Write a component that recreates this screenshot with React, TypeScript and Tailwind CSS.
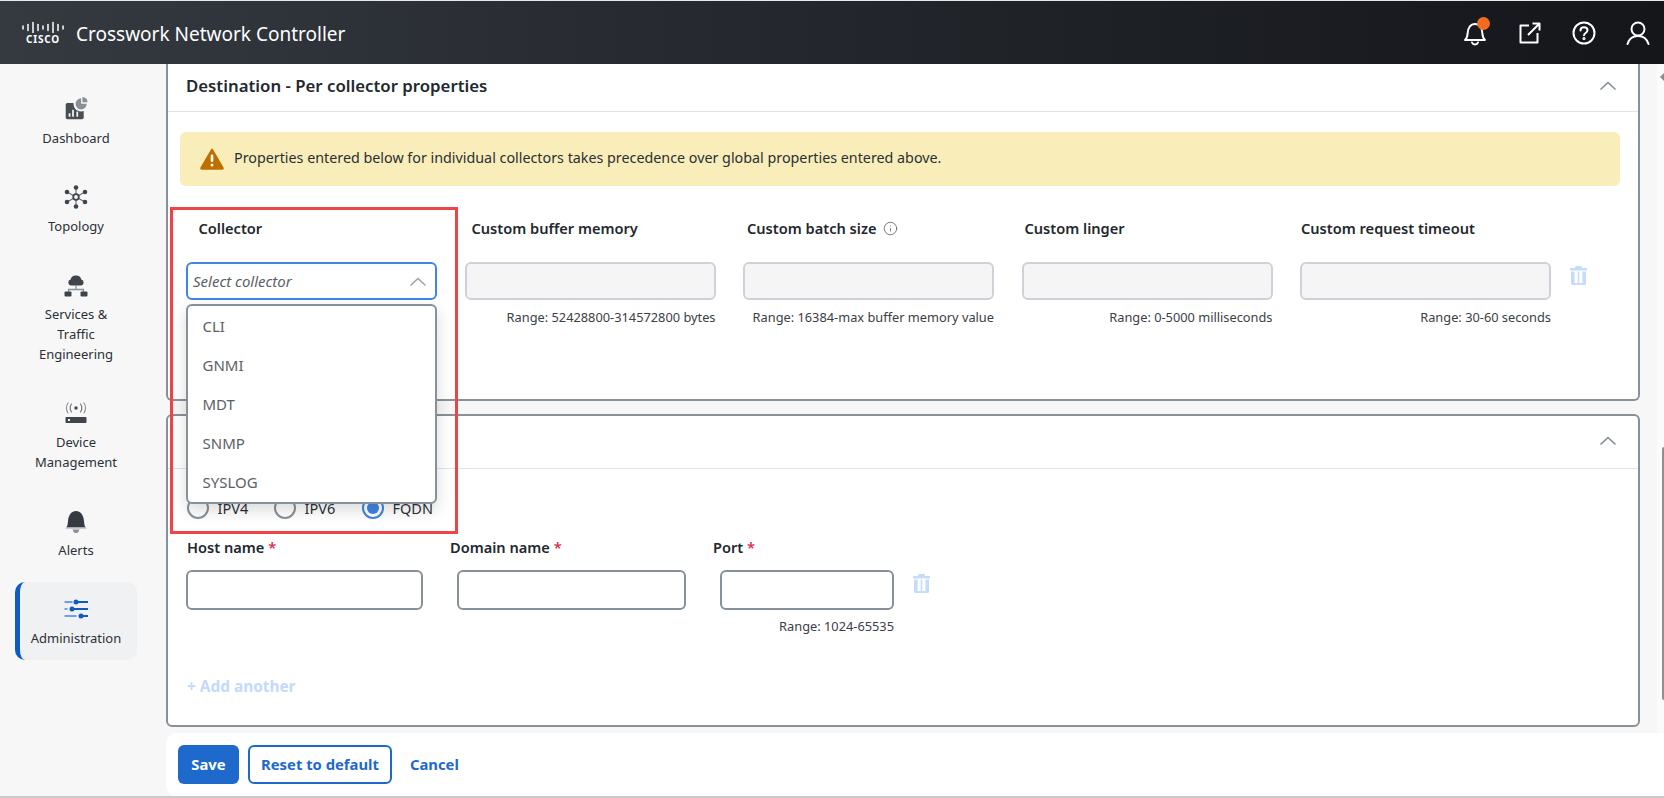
import { Info } from "lucide-react";

const font = "font-['Noto_Sans',sans-serif]";

function CiscoLogo() {
  const bars = [3, 6, 10, 6, 3, 6, 10, 6, 3];
  return (
    <div className="flex w-[42px] flex-col items-center">
      <svg width="42" height="12" viewBox="0 0 42 12" fill="none">
        {bars.map((h, i) => (
          <line key={i} x1={1 + i * 5} x2={1 + i * 5} y1={6 - h / 2 + 0.5} y2={6 + h / 2 + 0.5} stroke="#fff" strokeWidth="1.5" strokeLinecap="round" />
        ))}
      </svg>
      <span className="mt-[1px] text-[10px] leading-[10px] font-bold tracking-[0.8px] text-white">CISCO</span>
    </div>
  );
}

function HeaderBell() {
  return (
    <div className="relative h-[26px] w-[26px]">
      <svg width="26" height="26" viewBox="0 0 26 26" fill="none" stroke="#fff" strokeWidth="2" strokeLinecap="round" strokeLinejoin="round">
        <path d="M3 20c2-1.600 2.400-3.200 2.600-6.500C5.900 8 8.600 4 13 4s7.100 4 7.400 9.500c.2 3.300.6 4.900 2.600 6.500z" />
        <path d="M10 22.500c.5 1.300 1.600 2 3 2s2.500-.7 3-2" />
      </svg>
      <span className="absolute top-[-3px] left-[15px] h-[13px] w-[13px] rounded-full bg-[#f26b21]" />
    </div>
  );
}

function HeaderExternal() {
  return (
    <svg width="24" height="24" viewBox="0 0 24 24" fill="none" stroke="#fff" strokeWidth="2" strokeLinejoin="round">
      <path d="M11 4.500H2.500v17h17V12" />
      <path d="M10 14 21 3M14.500 2.500h7v7" />
    </svg>
  );
}

function HeaderHelp() {
  return (
    <svg width="24" height="24" viewBox="0 0 24 24" fill="none" stroke="#fff" strokeWidth="2" strokeLinecap="round">
      <circle cx="12" cy="12" r="10.500" />
      <path d="M8.500 9.500c0-2 1.500-3.200 3.500-3.200s3.500 1.200 3.500 3c0 2.700-3.500 2.600-3.500 5" />
      <circle cx="12" cy="17.500" r="0.600" fill="#fff" />
    </svg>
  );
}

function HeaderUser() {
  return (
    <svg width="24" height="24" viewBox="0 0 24 24" fill="none" stroke="#fff" strokeWidth="2" strokeLinecap="round">
      <circle cx="12" cy="8" r="6.500" />
      <path d="M1.500 23c1.500-5 5-8 10.500-8s9 3 10.500 8" />
    </svg>
  );
}

function DashboardIcon() {
  return (
    <svg width="28" height="28" viewBox="0 0 28 28">
      <rect x="2" y="7" width="21" height="19" rx="2" fill="#494e55" />
      <circle cx="20" cy="8" r="9" fill="#f7f7f8" />
      <path d="M20 1.500a6.500 6.500 0 1 0 6.500 6.500H20z" fill="#888f98" />
      <path d="M21.500 0a6.500 6.500 0 0 1 6 6h-6z" fill="#888f98" />
      <rect x="5.500" y="19" width="2" height="4" fill="#f7f7f8" />
      <rect x="9.500" y="15" width="2" height="8" fill="#f7f7f8" />
      <rect x="14.500" y="17" width="2" height="6" fill="#f7f7f8" />
    </svg>
  );
}

function TopologyIcon() {
  const nodes = [[12, 2.500], [12, 21.500], [3, 7], [21, 7], [3, 17], [21, 17]];
  return (
    <svg width="24" height="24" viewBox="0 0 24 24">
      {nodes.map(([x, y]) => (
        <g key={`${x}-${y}`}>
          <line x1="12" y1="12" x2={x} y2={y} stroke="#6b7178" strokeWidth="1.200" />
          <circle cx={x} cy={y} r="2.300" fill="#40454c" />
        </g>
      ))}
      <circle cx="12" cy="12" r="2.800" fill="#f7f7f8" stroke="#40454c" strokeWidth="1.800" />
    </svg>
  );
}

function ServicesIcon() {
  return (
    <svg width="24" height="24" viewBox="0 0 24 24">
      <path d="M7 12.500a3 3 0 0 1-.4-5.900A5.300 5.300 0 0 1 12 2.500a5.300 5.300 0 0 1 5.300 4.100A3 3 0 0 1 17 12.500z" fill="#3f444b" />
      <path d="M12 12v4.500M4.500 20v-3.500h15V20" stroke="#8a9199" strokeWidth="1.300" fill="none" />
      <rect x="0.500" y="18.500" width="7" height="5" rx="1" fill="#3f444b" />
      <rect x="16.500" y="18.500" width="7" height="5" rx="1" fill="#3f444b" />
    </svg>
  );
}

function DeviceIcon() {
  return (
    <svg width="24" height="24" viewBox="0 0 24 24" fill="none">
      <circle cx="12" cy="7" r="1.700" fill="#40454c" />
      <path d="M7.500 3c-1.600 2.400-1.600 5.600 0 8M16.500 3c1.600 2.400 1.600 5.600 0 8" stroke="#6b7178" strokeWidth="1.100" strokeLinecap="round" />
      <path d="M4 2c-2 3.200-2 6.800 0 10M20 2c2 3.200 2 6.800 0 10" stroke="#8a9199" strokeWidth="1.100" strokeLinecap="round" />
      <rect x="1.500" y="16" width="21" height="6" rx="1" fill="#40454c" />
      <rect x="4" y="18" width="2" height="2" fill="#f7f7f8" />
    </svg>
  );
}

function AlertsIcon() {
  return (
    <svg width="24" height="24" viewBox="0 0 24 24">
      <path d="M2 18.500c1.300-1 1.700-2.500 2-6.500C4.400 6 7.600 2 12 2s7.600 4 8 10c.3 4 .7 5.500 2 6.500z" fill="#363b42" />
      <rect x="1.500" y="18.500" width="21" height="1.300" rx="0.600" fill="#b9bec4" />
      <path d="M8.500 20.500h7l-1 2.200a3 3 0 0 1-5 0z" fill="#8a9199" />
    </svg>
  );
}

function AdminIcon() {
  return (
    <svg width="24" height="24" viewBox="0 0 24 24" fill="none" strokeWidth="2">
      <path d="M0.500 5h8M0.500 12h3M0.500 19h12" stroke="#6da1ee" />
      <path d="M12 5h12M8 12h16M17 19h7" stroke="#0d5cc1" />
      <circle cx="12" cy="5" r="2.500" fill="#0d5cc1" />
      <circle cx="8" cy="12" r="2.500" fill="#0d5cc1" />
      <circle cx="17" cy="19" r="2.500" fill="#0d5cc1" />
    </svg>
  );
}

function WarningIcon() {
  return (
    <svg width="24" height="22" viewBox="0 0 24 22">
      <path d="M12 1.500 22.800 20a.6.6 0 0 1-.5.900H1.700a.6.6 0 0 1-.5-.900z" fill="#bf6f00" stroke="#bf6f00" strokeWidth="1.800" strokeLinejoin="round" />
      <rect x="10.700" y="6.500" width="2.600" height="7.500" rx="1.200" fill="#fff" />
      <circle cx="12" cy="17" r="1.500" fill="#fff" />
    </svg>
  );
}

function Chevron({ color = "#868e96" }: { color?: string }) {
  return (
    <svg width="16" height="9" viewBox="0 0 16 9" fill="none" stroke={color} strokeWidth="1.700" strokeLinecap="round" strokeLinejoin="round">
      <path d="M1 8l7-6.500L15 8" />
    </svg>
  );
}

function TrashIcon() {
  return (
    <svg width="17" height="19" viewBox="0 0 17 19" fill="#c6dcfb">
      <rect x="5" y="0" width="7" height="2" rx="1" />
      <rect x="0" y="2" width="17" height="2.500" rx="0.600" />
      <path d="M1 5.500h3.600V17h3.100V5.500h1.600V17h3.100V5.500H16V17.500A1.500 1.500 0 0 1 14.500 19h-12A1.500 1.500 0 0 1 1 17.500z" />
    </svg>
  );
}

const sideItems = [
  { label: ["Dashboard"], icon: <DashboardIcon /> },
  { label: ["Topology"], icon: <TopologyIcon /> },
  { label: ["Services &", "Traffic", "Engineering"], icon: <ServicesIcon /> },
  { label: ["Device", "Management"], icon: <DeviceIcon /> },
  { label: ["Alerts"], icon: <AlertsIcon /> },
  { label: ["Administration"], icon: <AdminIcon />, active: true },
];

function Sidebar() {
  return (
    <aside className="flex w-[166px] shrink-0 flex-col gap-[10px] pt-[18px] pl-[15px]">
      {sideItems.map((item) => (
        <div
          key={item.label[0]}
          className={`flex w-[122px] flex-col items-center pt-[15px] pb-[12px] ${
            item.active ? "rounded-[10px] border-l-[5px] border-[#0d5cc1] bg-[#f0f1f3]" : ""
          }`}
        >
          <div className={`flex h-[24px] w-[24px] items-center justify-center ${item.active ? "-ml-[5px]" : ""}`}>{item.icon}</div>
          <div className={`mt-[7px] text-center text-[13px] leading-[20px] text-[#2b3036] ${item.active ? "-ml-[5px]" : ""}`}>
            {item.label.map((l) => (
              <div key={l}>{l}</div>
            ))}
          </div>
        </div>
      ))}
    </aside>
  );
}

const collectorOptions = ["CLI", "GNMI", "MDT", "SNMP", "SYSLOG"];

const customFields = [
  { label: "Custom buffer memory", range: "Range: 52428800-314572800 bytes", indent: "pl-[7px]" },
  { label: "Custom batch size", range: "Range: 16384-max buffer memory value", indent: "pl-[4px]", info: true },
  { label: "Custom linger", range: "Range: 0-5000 milliseconds", indent: "pl-[3px]" },
  { label: "Custom request timeout", range: "Range: 30-60 seconds", indent: "pl-[1px]" },
];

const labelClass = "text-[14.600px] leading-[20px] font-semibold text-[#23282e]";
const rangeClass = "mt-[8px] whitespace-nowrap text-right text-[12.800px] leading-[18px] text-[#3b4046]";

function CollectorCard() {
  return (
    <section className="h-[337px] shrink-0 rounded-b-[6px] border-x-2 border-b-2 border-[#889099] bg-white">
      <div className="flex h-[48px] items-center justify-between border-b border-[#dfe3e8] pr-[22px] pl-[18px]">
        <h2 className="pb-[4px] text-[16.800px] font-semibold text-[#23282e]">Destination - Per collector properties</h2>
        <div className="pb-[4px]">
          <Chevron />
        </div>
      </div>
      <div className="mt-[20px] mr-[18px] ml-[12px] flex h-[54px] items-center gap-[10px] rounded-[6px] bg-[#f9edb9] pl-[20px]">
        <WarningIcon />
        <span className="pb-[2px] text-[14.300px] text-[#2b3036]">Properties entered below for individual collectors takes precedence over global properties entered above.</span>
      </div>
      <div className="mt-[32px] flex gap-[27.500px] pl-[18px]">
        <div className="w-[251px]">
          <div className={`${labelClass} pl-[12.500px]`}>Collector</div>
          <div className="relative mt-[24px]">
            <div className="flex h-[38px] items-center justify-between rounded-[6px] border-2 border-[#3f86e4] bg-white pr-[9px] pl-[5px]">
              <span className="text-[15px] text-[#5a5f65] italic">Select collector</span>
              <Chevron color="#a0a5ab" />
            </div>
            <ul className="absolute top-[42px] left-0 z-20 h-[200px] w-full rounded-[6px] border-2 border-[#889099] bg-white pt-[1px] pl-[14.500px] shadow-[0_6px_16px_rgba(0,0,0,0.15)]">
              {collectorOptions.map((o) => (
                <li key={o} className="flex h-[39px] items-center text-[15px] text-[#5c6167]">
                  {o}
                </li>
              ))}
            </ul>
          </div>
        </div>
        {customFields.map((f) => (
          <div key={f.label} className="w-[251px]">
            <div className={`${labelClass} ${f.indent} flex items-center gap-[6px]`}>
              {f.label}
              {f.info && <Info size={15} color="#6c737a" strokeWidth={1.500} />}
            </div>
            <div className="mt-[24px] h-[38px] rounded-[6px] border-2 border-[#ced2d8] bg-[#f5f5f6]" />
            <div className={rangeClass}>{f.range}</div>
          </div>
        ))}
        <div className="-ml-[9px] pt-[48px]">
          <TrashIcon />
        </div>
      </div>
    </section>
  );
}

function Radio({ label, checked }: { label: string; checked?: boolean }) {
  return (
    <label className="flex items-center gap-[9px] text-[14.500px] leading-[22px] text-[#2b3036]">
      <span className={`flex h-[22px] w-[22px] items-center justify-center rounded-full border-2 ${checked ? "border-[#3f86e4]" : "border-[#889099]"}`}>
        {checked && <span className="h-[12px] w-[12px] rounded-full bg-[#3f86e4]" />}
      </span>
      {label}
    </label>
  );
}

const addressFields = [
  { label: "Host name", width: "w-[237px]", gap: "mr-[34px]", indent: "pl-[1px]" },
  { label: "Domain name", width: "w-[229px]", gap: "mr-[34px]", indent: "-ml-[7px]" },
  { label: "Port", width: "w-[174px]", gap: "mr-[19px]", indent: "-ml-[7px]", range: "Range: 1024-65535" },
];

function AddressCard() {
  return (
    <section className="mt-[13px] h-[313px] shrink-0 rounded-[6px] border-2 border-[#889099] bg-white">
      <div className="flex h-[53px] items-center justify-end border-b border-[#dfe3e8] pr-[22px] pb-[4px]">
        <Chevron />
      </div>
      <div className="mt-[28px] flex pl-[18.500px]">
        <div className="w-[87px]">
          <Radio label="IPV4" />
        </div>
        <div className="w-[88px]">
          <Radio label="IPV6" />
        </div>
        <Radio label="FQDN" checked />
      </div>
      <div className="mt-[18px] flex pl-[18px]">
        {addressFields.map((f) => (
          <div key={f.label} className={`${f.width} ${f.gap}`}>
            <div className={`${labelClass} ${f.indent}`}>
              {f.label} <span className="text-[#d9304f]">*</span>
            </div>
            <div className="mt-[13px] h-[40px] rounded-[6px] border-2 border-[#889099] bg-white" />
            {f.range && <div className="mt-[7px] text-right text-[12.800px] leading-[18px] text-[#3b4046]">{f.range}</div>}
          </div>
        ))}
        <div className="pt-[37px]">
          <TrashIcon />
        </div>
      </div>
      <div className="mt-[42px] pl-[19px] text-[15.400px] leading-[20px] font-bold text-[#c3dafa]">+ Add another</div>
    </section>
  );
}

function Footer() {
  return (
    <footer className="flex h-[63px] shrink-0 items-center rounded-l-[10px] bg-white pl-[12px]">
      <button className="h-[39px] w-[61px] rounded-[6px] bg-[#1d69cc] text-[14.800px] font-bold text-white">Save</button>
      <button className="ml-[9px] h-[39px] w-[144px] rounded-[6px] border-2 border-[#1d69cc] bg-white text-[14.800px] font-bold text-[#1d69cc]">Reset to default</button>
      <button className="ml-[18px] text-[14.800px] font-bold text-[#1d69cc]">Cancel</button>
    </footer>
  );
}

export default function App() {
  return (
    <div className={`flex h-[798px] w-[1664px] flex-col overflow-hidden bg-[#f7f7f8] ${font}`}>
      <div className="h-px shrink-0 bg-[#e8e8ea]" />
      <header className="flex h-[63px] shrink-0 items-center justify-between bg-gradient-to-r from-[#353a41] via-[#23262c] to-[#14161a] pr-[14px] pl-[22px]">
        <div className="flex items-center gap-[12px]">
          <CiscoLogo />
          <span className="pt-[3px] text-[19px] text-white">Crosswork Network Controller</span>
        </div>
        <div className="flex items-center gap-[30px]">
          <HeaderBell />
          <HeaderExternal />
          <HeaderHelp />
          <HeaderUser />
        </div>
      </header>
      <div className="flex min-h-0 flex-1">
        <Sidebar />
        <div className="flex min-w-0 flex-1 flex-col">
          <div className="flex min-h-0 flex-1">
            <main className="relative w-[1474px] shrink-0">
              <CollectorCard />
              <AddressCard />
              <div className="pointer-events-none absolute top-[143px] left-[4px] z-30 h-[327px] w-[288px] border-[3px] border-[#f04343]" />
            </main>
            <div className="ml-auto flex w-[7px] flex-col items-end bg-[#fbfbfb]">
              <svg className="mt-[9px]" width="4" height="8" viewBox="0 0 4 8" fill="#8c8c8c">
                <path d="M0 4 4 0v8z" />
              </svg>
              <div className="mt-[366px] h-[253px] w-[2px] rounded-l-[2px] bg-[#8f8f8f]" />
            </div>
          </div>
          <Footer />
        </div>
      </div>
      <div className="h-[2px] shrink-0 bg-[#c9c9c9]" />
    </div>
  );
}
